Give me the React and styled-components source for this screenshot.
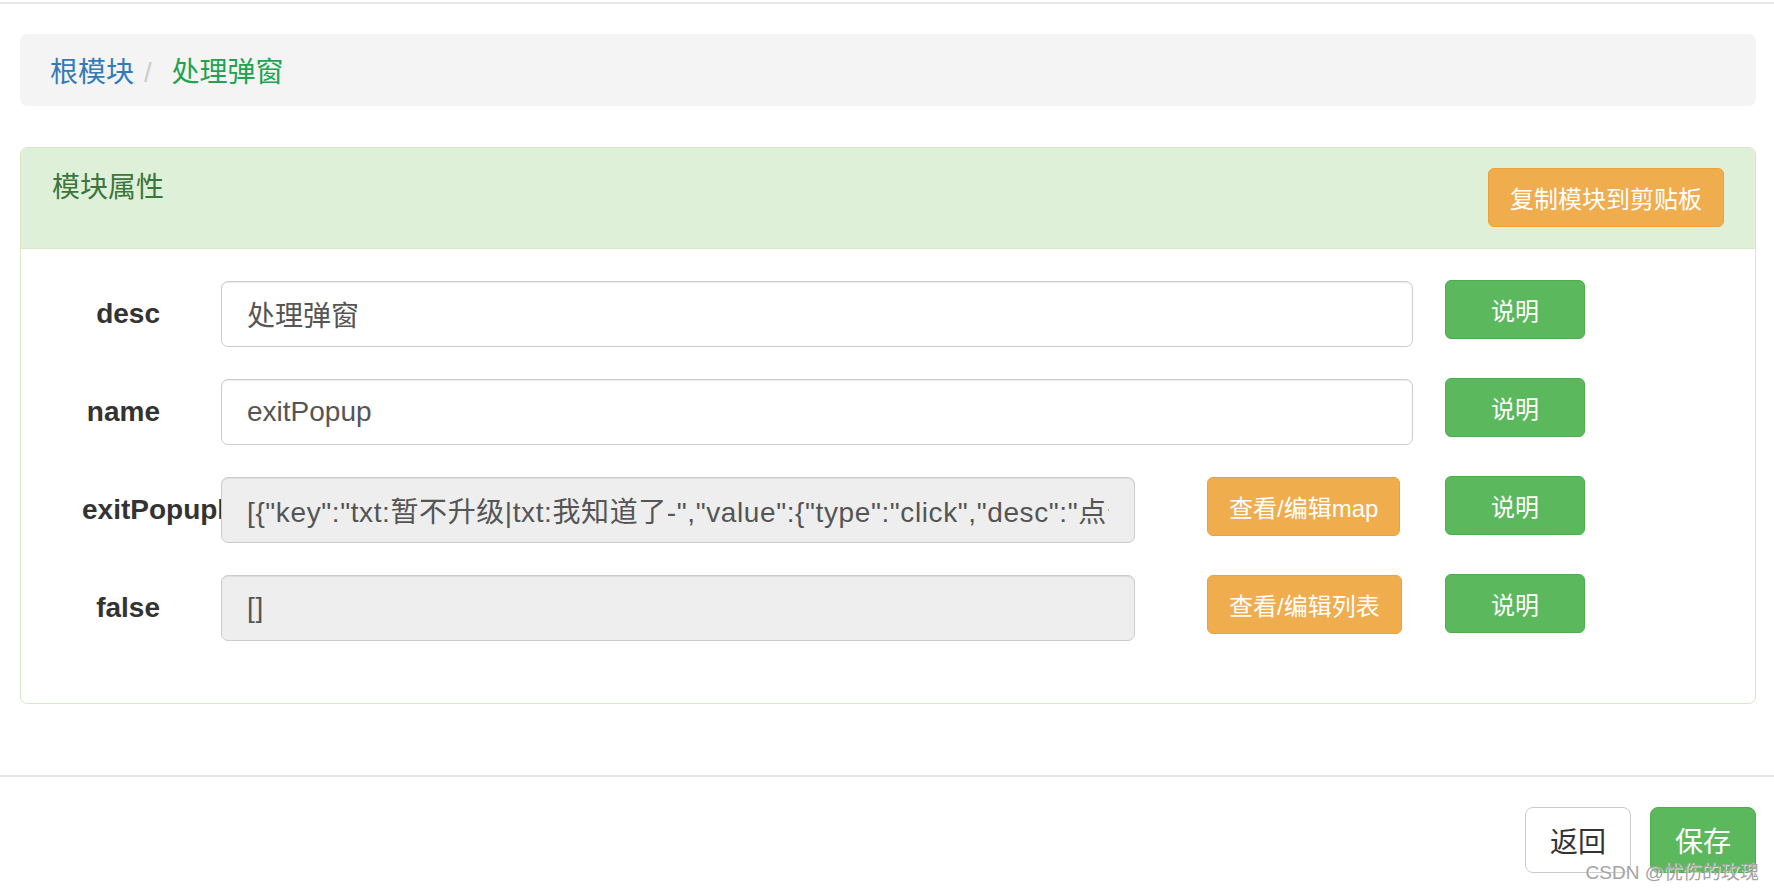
import * as React from "react";
import styled, { createGlobalStyle } from "styled-components";

const GlobalStyle = createGlobalStyle`
  html, body {
    margin: 0;
    padding: 0;
    background: #fff;
  }
  body {
    font-family: "Liberation Sans", "Noto Sans CJK SC", Arial, sans-serif;
    color: #333;
  }
  * {
    box-sizing: border-box;
  }
`;

const Page = styled.div`
  position: relative;
  margin-top: 2px;
  border-top: 2px solid #e6e6e6;
  min-height: 888px;
`;

const Content = styled.div`
  padding: 0 18px 0 20px;
`;

const Breadcrumb = styled.ol`
  list-style: none;
  margin: 30px 0 0 0;
  padding: 0 30px;
  height: 72px;
  display: flex;
  align-items: center;
  background: #f4f4f4;
  border-radius: 7px;
  font-size: 28px;
`;

const Crumb = styled.li`
  color: ${(props) => (props.active ? "#22a352" : "#337ab7")};
  &:not(:first-child)::before {
    content: "/\\00a0";
    padding: 0 12px 0 10px;
    color: #ccc;
  }
`;

const Panel = styled.div`
  margin-top: 41px;
  border: 1px solid #d6e9c6;
  border-radius: 7px;
  overflow: hidden;
`;

const PanelHeading = styled.div`
  display: flex;
  justify-content: space-between;
  align-items: flex-start;
  height: 101px;
  padding: 20px 31px 0 31px;
  background: #dff0d8;
  border-bottom: 1px solid #d6e9c6;
`;

const PanelTitle = styled.h3`
  margin: 0;
  font-size: 28px;
  font-weight: 400;
  line-height: 40px;
  color: #3c763d;
`;

const PanelBody = styled.div`
  padding: 32px 0 62px 0;
  display: grid;
  grid-template-columns: 200px 914px 310px 140px;
  grid-auto-rows: 66px;
  row-gap: 32px;
`;

const Label = styled.label`
  padding: 0 61px 0 61px;
  font-size: 28px;
  font-weight: 700;
  line-height: 66px;
  text-align: right;
  white-space: nowrap;
  color: #333;
`;

const Field = styled.input`
  grid-column: ${(props) => (props.wide ? "2 / 4" : "2 / 3")};
  width: ${(props) => (props.wide ? "calc(100% - 32px)" : "100%")};
  height: 66px;
  padding: 0 25px;
  font-family: inherit;
  font-size: 28px;
  letter-spacing: ${(props) => (props.disabled ? "0.6px" : "0")};
  color: #555;
  background: ${(props) => (props.disabled ? "#eee" : "#fff")};
  border: 1px solid #ccc;
  border-radius: 7px;
  box-shadow: inset 0 1px 1px rgba(0, 0, 0, 0.075);
  outline: none;
`;

const ActionCell = styled.div`
  padding-left: 72px;
`;

const Button = styled.button`
  height: ${(props) => (props.large ? "66px" : "59px")};
  padding: 0 ${(props) => (props.large ? "24px" : "21px")};
  font-family: inherit;
  font-size: ${(props) => (props.large ? "28px" : "24px")};
  border-radius: ${(props) => (props.large ? "8px" : "6px")};
  border: 1px solid;
  cursor: pointer;
  white-space: nowrap;
  color: #fff;
  ${(props) =>
    props.variant === "warning" &&
    `background: #f0ad4e; border-color: #eea236;`}
  ${(props) =>
    props.variant === "success" &&
    `background: #5cb85c; border-color: #4cae4c;`}
  ${(props) =>
    props.variant === "default" &&
    `background: #fff; border-color: #ccc; color: #333;`}
`;

const HelpButton = styled(Button)`
  width: 140px;
  margin-top: -1px;
`;

const Footer = styled.div`
  margin-top: 71px;
  border-top: 2px solid #e6e6e6;
  padding: 30px 18px 0 0;
  display: flex;
  justify-content: flex-end;
  gap: 19px;
`;

const Watermark = styled.div`
  position: absolute;
  right: 15px;
  bottom: 6px;
  font-size: 19px;
  line-height: 22px;
  color: #a3a3a3;
  text-shadow: 1px 1px 0 rgba(255, 255, 255, 0.7);
  pointer-events: none;
`;

const rows = [
  { label: "desc", value: "处理弹窗", wide: true },
  { label: "name", value: "exitPopup", wide: true },
  {
    label: "exitPopuplist",
    value:
      '[{"key":"txt:暂不升级|txt:我知道了-","value":{"type":"click","desc":"点击关闭弹窗"}}]',
    disabled: true,
    action: "查看/编辑map",
  },
  { label: "false", value: "[]", disabled: true, action: "查看/编辑列表" },
];

function App() {
  return (
    <Page>
      <GlobalStyle />
      <Content>
        <Breadcrumb>
          <Crumb>根模块</Crumb>
          <Crumb active>处理弹窗</Crumb>
        </Breadcrumb>
        <Panel>
          <PanelHeading>
            <PanelTitle>模块属性</PanelTitle>
            <Button variant="warning">复制模块到剪贴板</Button>
          </PanelHeading>
          <PanelBody>
            {rows.map((row) => (
              <React.Fragment key={row.label}>
                <Label>{row.label}</Label>
                <Field
                  wide={row.wide}
                  disabled={row.disabled}
                  value={row.value}
                  readOnly
                />
                {row.action && (
                  <ActionCell>
                    <Button variant="warning">{row.action}</Button>
                  </ActionCell>
                )}
                <HelpButton variant="success">说明</HelpButton>
              </React.Fragment>
            ))}
          </PanelBody>
        </Panel>
      </Content>
      <Footer>
        <Button large variant="default">
          返回
        </Button>
        <Button large variant="success">
          保存
        </Button>
      </Footer>
      <Watermark>CSDN @忧伤的玫瑰</Watermark>
    </Page>
  );
}

export default App;
